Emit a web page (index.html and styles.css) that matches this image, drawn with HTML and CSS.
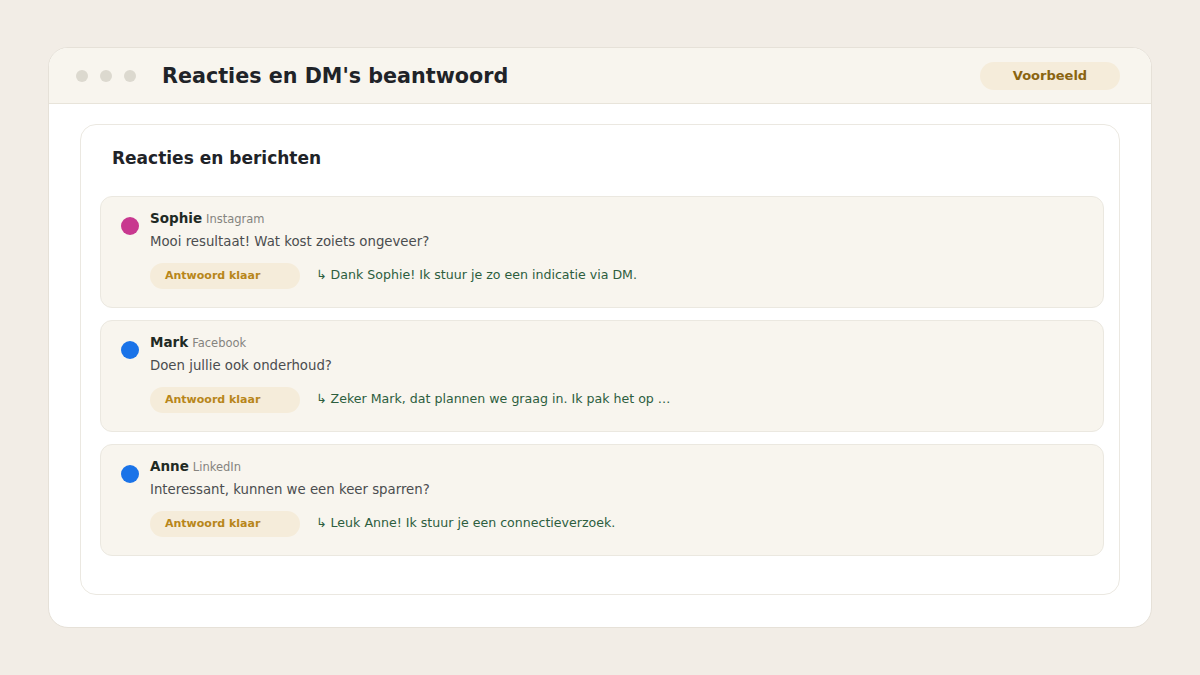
FILE: index.html
```html
<!DOCTYPE html>
<html lang="nl">
<head>
    <meta charset="UTF-8">
    <meta name="viewport" content="width=device-width, initial-scale=1.0">
    <title>Reacties en DM's beantwoord</title>
    <link rel="stylesheet" href="styles.css">
</head>
<body>
    <div class="window">
        <div class="titlebar">
            <div class="dots"><span></span><span></span><span></span></div>
            <h1>Reacties en DM's beantwoord</h1>
            <div class="tag">Voorbeeld</div>
        </div>
        <div class="content">
            <div class="card">
                <h2>Reacties en berichten</h2>
                <div class="list">
                    <div class="item">
                        <span class="avatar insta"></span>
                        <div class="body">
                            <div class="who"><b>Sophie</b><span class="platform">Instagram</span></div>
                            <p class="msg">Mooi resultaat! Wat kost zoiets ongeveer?</p>
                            <div class="answer">
                                <span class="status">Antwoord klaar</span>
                                <span class="reply">↳ Dank Sophie! Ik stuur je zo een indicatie via DM.</span>
                            </div>
                        </div>
                    </div>
                    <div class="item">
                        <span class="avatar blue"></span>
                        <div class="body">
                            <div class="who"><b>Mark</b><span class="platform">Facebook</span></div>
                            <p class="msg">Doen jullie ook onderhoud?</p>
                            <div class="answer">
                                <span class="status">Antwoord klaar</span>
                                <span class="reply">↳ Zeker Mark, dat plannen we graag in. Ik pak het op …</span>
                            </div>
                        </div>
                    </div>
                    <div class="item">
                        <span class="avatar blue"></span>
                        <div class="body">
                            <div class="who"><b>Anne</b><span class="platform">LinkedIn</span></div>
                            <p class="msg">Interessant, kunnen we een keer sparren?</p>
                            <div class="answer">
                                <span class="status">Antwoord klaar</span>
                                <span class="reply">↳ Leuk Anne! Ik stuur je een connectieverzoek.</span>
                            </div>
                        </div>
                    </div>
                </div>
            </div>
        </div>
    </div>
</body>
</html>
```

FILE: styles.css
```css
* { padding: 0; margin: 0; box-sizing: border-box; }
body {
    font-family: "DejaVu Sans", sans-serif;
    background-color: #f2ede6;
    color: #1f2328;
    padding: 47px 48px;
}
.window {
    height: 581px;
    background-color: #fff;
    border: 1px solid #e6e1d8;
    border-radius: 20px;
    overflow: hidden;
}
.titlebar {
    height: 56px;
    display: flex;
    align-items: center;
    padding: 0 31px 0 27px;
    background-color: #f8f5ee;
    border-bottom: 1px solid #e8e4da;
}
.dots { display: flex; gap: 12px; }
.dots span {
    width: 12px;
    height: 12px;
    border-radius: 50%;
    background-color: #dcd9cf;
}
h1 { font-size: 20.7px; font-weight: bold; margin-left: 26px; flex: 1; }
.tag {
    width: 140px;
    height: 28px;
    line-height: 28px;
    text-align: center;
    border-radius: 14px;
    background-color: #f5ecda;
    color: #8a6410;
    font-size: 13px;
    font-weight: bold;
}
.content { padding: 20px 31px 0; }
.card {
    border: 1px solid #ebe8e1;
    border-radius: 16px;
    padding: 23px 15px 38px 19px;
}
h2 { font-size: 17px; line-height: 20px; margin: 0 0 28px 12px; }
.list { display: flex; flex-direction: column; gap: 12px; }
.item {
    height: 112px;
    display: flex;
    align-items: flex-start;
    gap: 11px;
    padding: 12px 20px;
    background-color: #f8f5ee;
    border: 1px solid #ebe8e0;
    border-radius: 12px;
}
.avatar { width: 18px; height: 18px; border-radius: 50%; margin-top: 8px; flex-shrink: 0; }
.avatar.insta { background-color: #c8388f; }
.avatar.blue { background-color: #1a73e8; }
.who { font-size: 13.5px; line-height: 18px; color: #1f2a24; }
.platform { font-size: 11.5px; color: #85847f; margin-left: 4px; }
.msg { font-size: 13.3px; line-height: 18px; color: #4b4d4f; margin-top: 5px; }
.answer { display: flex; align-items: baseline; gap: 16px; margin-top: 12px; }
.status {
    width: 150px;
    height: 26px;
    line-height: 26px;
    padding-left: 15px;
    border-radius: 13px;
    background-color: #f5ecda;
    color: #b8861a;
    font-size: 11px;
    font-weight: bold;
}
.reply { font-size: 12.6px; color: #2d5e3e; }
```
